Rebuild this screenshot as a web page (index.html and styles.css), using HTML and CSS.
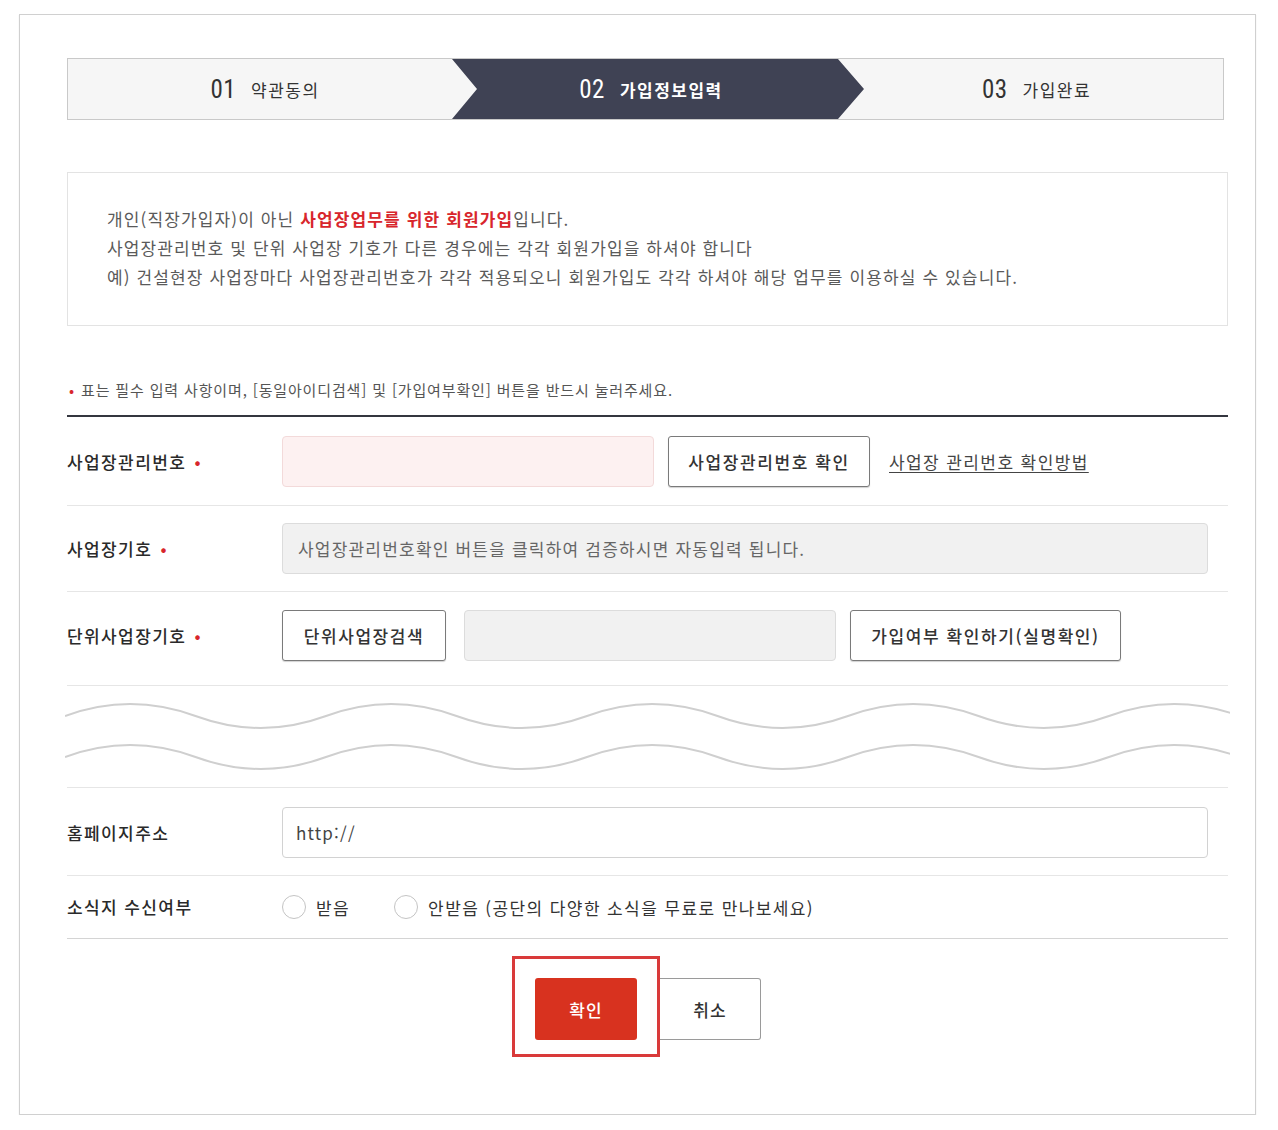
FILE: index.html
```html
<!DOCTYPE html>
<html lang="ko">
<head>
<meta charset="utf-8">
<title>회원가입 - 가입정보입력</title>
<link rel="stylesheet" href="styles.css">
</head>
<body>
<div class="frame">
  <div class="steps">
    <div class="step step-1"><span class="num">01</span><span class="name">약관동의</span></div>
    <div class="step step-2"><span class="num">02</span><span class="name">가입정보입력</span></div>
    <div class="step step-3"><span class="num">03</span><span class="name">가입완료</span></div>
  </div>

  <div class="notice">
    <p>개인(직장가입자)이 아닌 <strong class="hl">사업장업무를 위한 회원가입</strong>입니다.</p>
    <p>사업장관리번호 및 단위 사업장 기호가 다른 경우에는 각각 회원가입을 하셔야 합니다</p>
    <p>예) 건설현장 사업장마다 사업장관리번호가 각각 적용되오니 회원가입도 각각 하셔야 해당 업무를 이용하실 수 있습니다.</p>
  </div>

  <p class="req-note"><span class="dot">•</span> 표는 필수 입력 사항이며, [동일아이디검색] 및 [가입여부확인] 버튼을 반드시 눌러주세요.</p>

  <div class="form">
    <div class="row row-1">
      <div class="label">사업장관리번호 <span class="dot">•</span></div>
      <div class="field">
        <div class="input input-pink w372"></div>
        <div class="btn w202">사업장관리번호 확인</div>
        <a class="link">사업장 관리번호 확인방법</a>
      </div>
    </div>
    <div class="row row-2">
      <div class="label">사업장기호 <span class="dot">•</span></div>
      <div class="field">
        <div class="input input-grey w926">사업장관리번호확인 버튼을 클릭하여 검증하시면 자동입력 됩니다.</div>
      </div>
    </div>
    <div class="row row-3">
      <div class="label">단위사업장기호 <span class="dot">•</span></div>
      <div class="field">
        <div class="btn w164">단위사업장검색</div>
        <div class="input input-grey w372 ml18"></div>
        <div class="btn w271">가입여부 확인하기(실명확인)</div>
      </div>
    </div>
    <div class="row row-wave">
      <svg class="wave" width="1165" height="101" viewBox="0 0 1165 101">
        <path d="M0,30 q65.25,-24 130.5,0 t130.5,0 t130.5,0 t130.5,0 t130.5,0 t130.5,0 t130.5,0 t130.5,0 t130.5,0" />
        <path d="M0,71 q65.25,-24 130.5,0 t130.5,0 t130.5,0 t130.5,0 t130.5,0 t130.5,0 t130.5,0 t130.5,0 t130.5,0" />
      </svg>
    </div>
    <div class="row row-home">
      <div class="label">홈페이지주소</div>
      <div class="field">
        <div class="input input-white w926">http://</div>
      </div>
    </div>
    <div class="row row-news">
      <div class="label">소식지 수신여부</div>
      <div class="field">
        <span class="radio"></span><span class="radio-text">받음</span>
        <span class="radio radio-2"></span><span class="radio-text">안받음 (공단의 다양한 소식을 무료로 만나보세요)</span>
      </div>
    </div>
  </div>

  <div class="actions">
    <div class="highlight"><div class="btn-ok">확인</div></div>
    <div class="btn-cancel">취소</div>
  </div>
</div>
</body>
</html>
```

FILE: styles.css
```css
html, body {
  margin: 0;
  padding: 0;
  background: #ffffff;
}

body {
  font-family: "Noto Sans CJK KR", "Noto Sans", sans-serif;
  color: #333;
}

.frame {
  box-sizing: border-box;
  margin: 14px 0 0 19px;
  width: 1237px;
  height: 1101px;
  border: 1px solid #d0d0d0;
  box-shadow: 0 1px 1px rgba(0, 0, 0, 0.12);
  padding: 43px 0 0 47px;
}

/* Steps */
.steps {
  box-sizing: border-box;
  display: flex;
  width: 1157px;
  height: 62px;
  border: 1px solid #c9c9c9;
  background: #f6f6f6;
}

.step {
  display: flex;
  align-items: center;
  justify-content: center;
  gap: 15px;
  height: 100%;
}

.step-1 {
  width: 384px;
  padding-left: 10px;
  box-sizing: border-box;
}

.step-2 {
  width: 412px;
  background: #3f4254;
  clip-path: polygon(0 0, 386px 0, 100% 50%, 386px 100%, 0 100%, 25px 50%);
  color: #fff;
  padding-right: 14px;
  box-sizing: border-box;
}

.step-3 {
  flex: 1;
  padding-right: 14px;
  box-sizing: border-box;
}

.num {
  font-family: "Liberation Sans Narrow", "Roboto Condensed", Roboto, sans-serif;
  font-size: 25px;
  line-height: 1;
  letter-spacing: 0.5px;
}

.name {
  font-size: 17px;
  line-height: 1;
  letter-spacing: 1.5px;
}

.step-2 .name {
  font-weight: 700;
}

/* Notice */
.notice {
  box-sizing: border-box;
  width: 1161px;
  margin-top: 52px;
  border: 1px solid #e3e3e3;
  padding: 31px 0 34px 39px;
  color: #5a5a5a;
  font-size: 17px;
  line-height: 29px;
  letter-spacing: 1.13px;
}

.notice p {
  margin: 0;
}

.hl {
  color: #d8262c;
  font-weight: 700;
}

/* Required note */
.req-note {
  margin: 54px 0 0 0;
  font-size: 15px;
  line-height: 20px;
  color: #555;
  letter-spacing: 0.85px;
}

.req-note .dot {
  color: #d8262c;
  margin-left: 2px;
  margin-right: 1px;
}

/* Form */
.form {
  width: 1161px;
  margin-top: 15px;
  border-top: 2px solid #34363f;
}

.row {
  display: grid;
  grid-template-columns: 215px 1fr;
  align-items: center;
  border-bottom: 1px solid #e6e6e6;
}

.row-1 { padding: 19px 0 18px; }
.row-2 { padding: 17px 0 17px; }
.row-3 { padding: 18px 0 24px; }
.row-home { padding: 19px 0 17px; }
.row-news { height: 62px; border-bottom-color: #d4d4d4; }

.row-wave {
  display: block;
  height: 101px;
}

.wave {
  display: block;
  margin-left: -2px;
}

.wave path {
  fill: none;
  stroke: #cfcfcf;
  stroke-width: 2;
}

.label {
  font-size: 17px;
  color: #2a2a2a;
  font-weight: 500;
  line-height: 24px;
  letter-spacing: 1.4px;
}

.label .dot {
  color: #d8262c;
  margin-left: 2px;
}

.field {
  display: flex;
  align-items: center;
}

.input {
  box-sizing: border-box;
  height: 51px;
  border-radius: 4px;
  display: flex;
  align-items: center;
  padding-left: 15px;
  font-size: 17px;
}

.input-pink {
  background: #fdf1f1;
  border: 1px solid #f3dada;
}

.input-grey {
  background: #f1f1f1;
  border: 1px solid #dcdcdc;
  color: #666;
  letter-spacing: 1.2px;
}

.input-white {
  background: #fff;
  border: 1px solid #d2d2d2;
  color: #444;
  padding-left: 13px;
  letter-spacing: 1.2px;
}

.w372 { width: 372px; }
.w926 { width: 926px; }
.w202 { width: 202px; }
.w164 { width: 164px; }
.w271 { width: 271px; }
.ml18 { margin-left: 18px; }

.btn {
  box-sizing: border-box;
  height: 51px;
  border: 1px solid #7a7a7a;
  border-radius: 3px;
  box-shadow: 0 1px 1px rgba(0, 0, 0, 0.18);
  background: #fff;
  display: flex;
  align-items: center;
  justify-content: center;
  font-size: 17px;
  color: #333;
  font-weight: 500;
  letter-spacing: 1.6px;
  margin-left: 14px;
}

.row-3 .btn:first-child {
  margin-left: 0;
}

.link {
  margin-left: 19px;
  font-size: 17px;
  color: #444;
  letter-spacing: 1.4px;
  text-decoration: underline;
  text-underline-offset: 3px;
}

.radio {
  box-sizing: border-box;
  width: 24px;
  height: 24px;
  border-radius: 50%;
  border: 1px solid #c4c4c4;
  background: #fff;
}

.radio-2 {
  margin-left: 44px;
}

.radio-text {
  margin-left: 10px;
  font-size: 17px;
  color: #333;
  letter-spacing: 1.4px;
}

/* Actions */
.actions {
  width: 1161px;
  display: flex;
  justify-content: center;
  align-items: flex-start;
  margin-top: 17px;
  padding-right: 22px;
  box-sizing: border-box;
}

.highlight {
  box-sizing: border-box;
  border: 3px solid #d93a3a;
  padding: 19px 20px 14px 20px;
}

.btn-ok {
  width: 102px;
  height: 62px;
  background: #d8321f;
  border-radius: 3px;
  color: #fff;
  font-size: 17px;
  font-weight: 500;
  letter-spacing: 1px;
  display: flex;
  align-items: center;
  justify-content: center;
}

.btn-cancel {
  box-sizing: border-box;
  width: 101px;
  height: 62px;
  margin-top: 22px;
  border: 1px solid #9a9a9a;
  border-left: none;
  border-radius: 0 3px 3px 0;
  background: #fff;
  color: #333;
  font-size: 17px;
  font-weight: 500;
  letter-spacing: 1px;
  display: flex;
  align-items: center;
  justify-content: center;
}
```
